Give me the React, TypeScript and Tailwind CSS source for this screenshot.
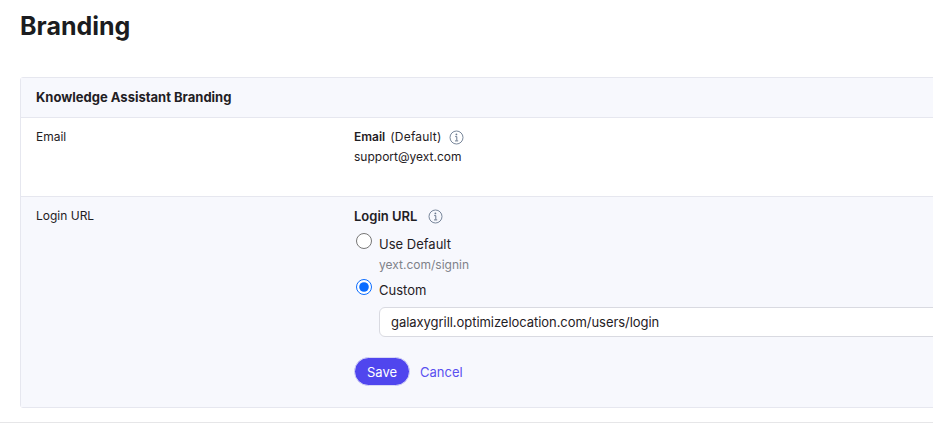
function InfoIcon() {
  return (
    <svg width="15" height="15" viewBox="0 0 15 15" fill="none" className="text-[#6b7a90]">
      <circle cx="7.5" cy="7.5" r="6.5" stroke="currentColor" strokeWidth="0.9" />
      <circle cx="7.4" cy="4.4" r="0.9" fill="currentColor" />
      <path d="M6.2 6.6h1.6v4M6 10.9h3.2" stroke="currentColor" strokeWidth="1" />
    </svg>
  );
}

export default function App() {
  return (
    <div className="h-[424px] w-[933px] overflow-hidden bg-white font-['Inter',sans-serif] text-[#1f2024]">
      <h1 className="pl-5 pt-[10px] text-[25px] font-bold leading-[32px] text-[#1b1c20]">
        Branding
      </h1>

      <section className="ml-5 mt-[35px] w-[960px] rounded-[3px] border border-[#e6e7ef]">
        <div className="flex h-[39px] items-center bg-[#f7f8fd] pl-[15px] text-[13px] font-bold">
          Knowledge Assistant Branding
        </div>

        <div className="flex h-[79px] border-t border-[#e6e7ef] pl-[15px] pt-[11px] text-[12px] leading-[16px]">
          <div className="w-[318px]">Email</div>
          <div>
            <div className="flex items-center">
              <span className="font-semibold">Email</span>
              <span className="ml-[5px] tracking-[0.2px]">(Default)</span>
              <span className="ml-[7px]">
                <InfoIcon />
              </span>
            </div>
            <div className="mt-[4px]">support@yext.com</div>
          </div>
        </div>

        <div className="flex h-[211px] border-t border-[#e6e7ef] bg-[#f7f8fd] pl-[15px] pt-[11px] text-[12px] leading-[16px]">
          <div className="w-[318px]">Login URL</div>
          <div className="w-[600px]">
            <div className="flex items-center">
              <span className="text-[13px] font-semibold">Login URL</span>
              <span className="ml-[11px]">
                <InfoIcon />
              </span>
            </div>

            <label className="mt-[12px] flex items-center text-[13px]">
              <input type="radio" name="login-url" className="ml-[2px] mr-[7px] size-4 -translate-y-[3px] accent-[#0a6cff]" />
              Use Default
            </label>
            <div className="ml-[25px] mt-[5px] text-[#7f8289]">yext.com/signin</div>

            <label className="mt-[9px] flex items-center text-[13px]">
              <input type="radio" name="login-url" defaultChecked className="ml-[2px] mr-[7px] size-4 -translate-y-[3px] accent-[#0a6cff]" />
              Custom
            </label>

            <input
              readOnly
              value="galaxygrill.optimizelocation.com/users/login"
              className="ml-[25px] mt-[9px] block h-[30px] w-[575px] rounded-[6px] border border-[#d9dae1] bg-white px-[11px] text-[13px] tracking-[-0.05px] outline-none"
            />

            <div className="mt-[20px] flex items-center">
              <button className="h-[29px] w-[56px] rounded-full border border-[#d8d8f6] bg-[#5046ee] text-[13px] text-white">
                Save
              </button>
              <button className="ml-[10px] text-[13px] text-[#5a50f0]">Cancel</button>
            </div>
          </div>
        </div>
      </section>

      <div className="mt-[14px] h-px bg-[#e6e6e8]" />
    </div>
  );
}
